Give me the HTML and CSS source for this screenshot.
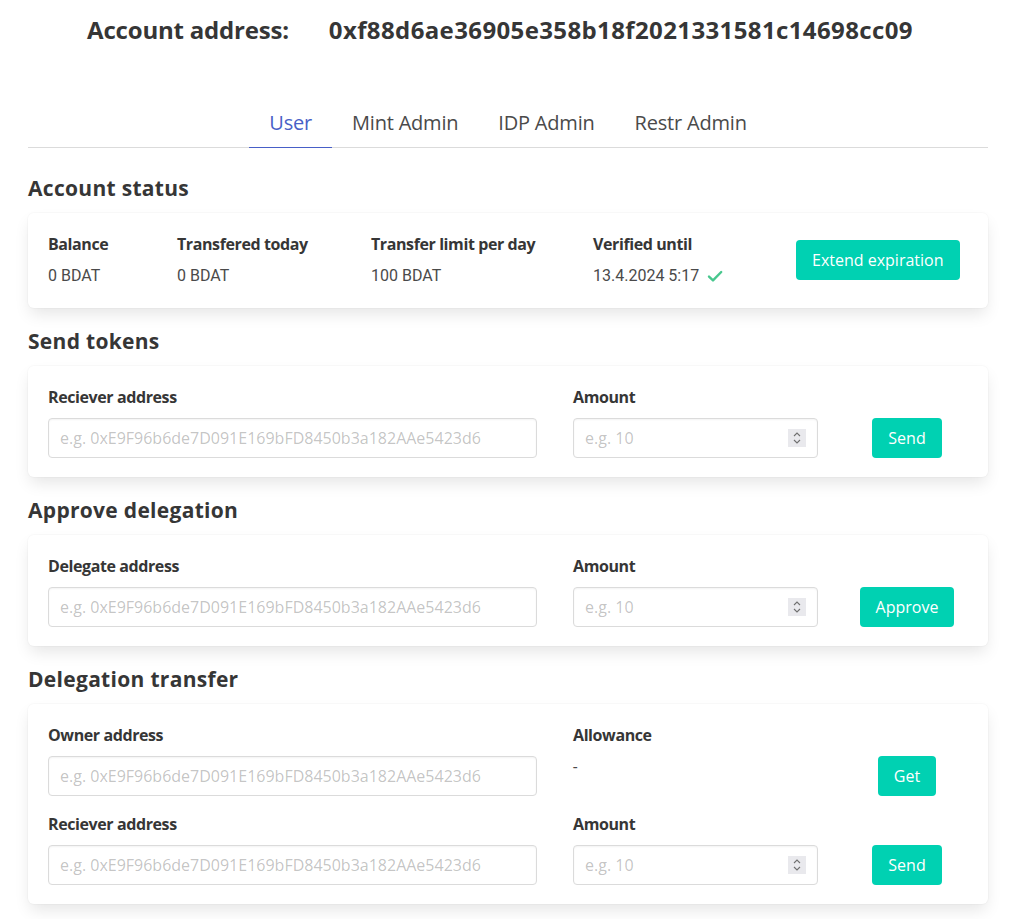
FILE: index.html
```html
<!DOCTYPE html>
<html>
<head>
<meta charset="utf-8">
<link rel="stylesheet" href="styles.css">
</head>
<body>
<div class="page">
  <div class="header">
    <span>Account address:</span>
    <span class="addr">0xf88d6ae36905e358b18f2021331581c14698cc09</span>
  </div>

  <nav class="tabs">
    <a class="tab active">User</a>
    <a class="tab">Mint Admin</a>
    <a class="tab">IDP Admin</a>
    <a class="tab">Restr Admin</a>
  </nav>

  <h2 class="section-title">Account status</h2>
  <div class="card status">
    <div class="stat w1"><div class="label">Balance</div><div class="value">0 BDAT</div></div>
    <div class="stat w2"><div class="label">Transfered today</div><div class="value">0 BDAT</div></div>
    <div class="stat w3"><div class="label">Transfer limit per day</div><div class="value">100 BDAT</div></div>
    <div class="stat w4"><div class="label">Verified until</div><div class="value">13.4.2024 5:17<svg class="check" viewBox="0 0 16 16" width="16" height="16"><path d="M2 8.6 L6 12.4 L14.2 4" fill="none" stroke="#48c78e" stroke-width="2.4" stroke-linecap="round" stroke-linejoin="round"/></svg></div></div>
    <button class="btn">Extend expiration</button>
  </div>

  <h2 class="section-title">Send tokens</h2>
  <div class="card form">
    <div class="field"><div class="label">Reciever address</div><input class="input" type="text" placeholder="e.g. 0xE9F96b6de7D091E169bFD8450b3a182AAe5423d6"></div>
    <div class="field"><div class="label">Amount</div><div class="num"><input class="input" type="number" placeholder="e.g. 10"><span class="spin"><svg viewBox="0 0 18 18" width="18" height="18"><path d="M6 7 L9 4 L12 7 M6 11 L9 14 L12 11" fill="none" stroke="#707070" stroke-width="1.1"/></svg></span></div></div>
    <div class="action"><button class="btn">Send</button></div>
  </div>

  <h2 class="section-title">Approve delegation</h2>
  <div class="card form">
    <div class="field"><div class="label">Delegate address</div><input class="input" type="text" placeholder="e.g. 0xE9F96b6de7D091E169bFD8450b3a182AAe5423d6"></div>
    <div class="field"><div class="label">Amount</div><div class="num"><input class="input" type="number" placeholder="e.g. 10"><span class="spin"><svg viewBox="0 0 18 18" width="18" height="18"><path d="M6 7 L9 4 L12 7 M6 11 L9 14 L12 11" fill="none" stroke="#707070" stroke-width="1.1"/></svg></span></div></div>
    <div class="action"><button class="btn">Approve</button></div>
  </div>

  <h2 class="section-title">Delegation transfer</h2>
  <div class="card form">
    <div class="field"><div class="label">Owner address</div><input class="input" type="text" placeholder="e.g. 0xE9F96b6de7D091E169bFD8450b3a182AAe5423d6"></div>
    <div class="field"><div class="label">Allowance</div><div class="value allow">-</div></div>
    <div class="action"><button class="btn">Get</button></div>
    <div class="field"><div class="label">Reciever address</div><input class="input" type="text" placeholder="e.g. 0xE9F96b6de7D091E169bFD8450b3a182AAe5423d6"></div>
    <div class="field"><div class="label">Amount</div><div class="num"><input class="input" type="number" placeholder="e.g. 10"><span class="spin"><svg viewBox="0 0 18 18" width="18" height="18"><path d="M6 7 L9 4 L12 7 M6 11 L9 14 L12 11" fill="none" stroke="#707070" stroke-width="1.1"/></svg></span></div></div>
    <div class="action"><button class="btn">Send</button></div>
  </div>
</div>
</body>
</html>
```

FILE: styles.css
```css
* { box-sizing: border-box; }
html, body { margin: 0; background: #fff; }
body {
  font-family: "Open Sans", "Noto Sans", sans-serif;
  color: #4a4a4a;
  font-size: 16px;
}
.page { padding: 12px 24px 0 28px; }

.header {
  display: flex;
  justify-content: center;
  gap: 40px;
  font-size: 24px;
  font-weight: 700;
  line-height: 36px;
  color: #363636;
  padding-right: 16px;
}
.header span:first-child { letter-spacing: -0.2px; }
.addr { letter-spacing: 0.38px; }

.tabs {
  margin-top: 50px;
  margin-bottom: 25px;
  display: flex;
  justify-content: center;
  border-bottom: 1px solid #dbdbdb;
}
.tab {
  font-size: 20px;
  line-height: 30px;
  letter-spacing: -0.2px;
  padding: 10px 20px 9px;
  border-bottom: 1px solid #dbdbdb;
  margin-bottom: -1px;
  color: #4a4a4a;
}
.tab.active { color: #485fc7; border-bottom-color: #485fc7; }

.section-title {
  margin: 0 0 10px;
  font-size: 21px;
  font-weight: 700;
  line-height: 30px;
  letter-spacing: 0.3px;
  color: #363636;
}

.card {
  background: #fff;
  border-radius: 6px;
  box-shadow: 0 0.5em 1em -0.125em rgba(10,10,10,.1), 0 0 0 1px rgba(10,10,10,.02);
  padding: 19px 28px 19px 20px;
  margin-bottom: 18px;
}
.status { display: flex; align-items: center; padding-bottom: 20px; }
.w1 { width: 129px; }
.w2 { width: 194px; }
.w3 { width: 222px; }
.w4 { width: 203px; }

.label {
  font-weight: 700;
  font-size: 16px;
  line-height: 24px;
  letter-spacing: -0.4px;
  color: #363636;
}
.value {
  margin-top: 8px;
  font-family: Roboto, "Liberation Sans", sans-serif;
  font-size: 16px;
  line-height: 24px;
  color: #4a4a4a;
  display: flex;
  align-items: center;
}
.value.allow { margin-top: 9px; }
.check { margin-left: 8px; }

.form {
  display: grid;
  grid-template-columns: 489px 245px 1fr;
  column-gap: 36px;
  row-gap: 16px;
}
.field { display: flex; flex-direction: column; }
.field > .input, .num { margin-top: 9px; }
.action { display: flex; align-items: flex-end; justify-content: center; }

.num { position: relative; }
.spin {
  position: absolute;
  right: 12px;
  top: 11px;
  width: 18px;
  height: 18px;
  background: #e9e9ed;
  display: block;
}
.spin svg { display: block; }

.input {
  height: 40px;
  width: 100%;
  border: 1px solid #dbdbdb;
  border-radius: 4px;
  padding: 0 11px;
  font-family: "Open Sans", "Noto Sans", sans-serif;
  font-size: 16px;
  color: #363636;
  background: #fff;
  box-shadow: inset 0 0.0625em 0.125em rgba(10,10,10,.05);
  outline: none;
  -moz-appearance: textfield;
}
.input::-webkit-inner-spin-button,
.input::-webkit-outer-spin-button { -webkit-appearance: none; margin: 0; }
.input::placeholder { color: rgba(54,54,54,.3); }

.btn {
  height: 40px;
  padding: 0 16px;
  border: none;
  border-radius: 4px;
  background: #00d1b2;
  color: #fff;
  font-family: "Open Sans", "Noto Sans", sans-serif;
  font-size: 16px;
  cursor: pointer;
}
```
